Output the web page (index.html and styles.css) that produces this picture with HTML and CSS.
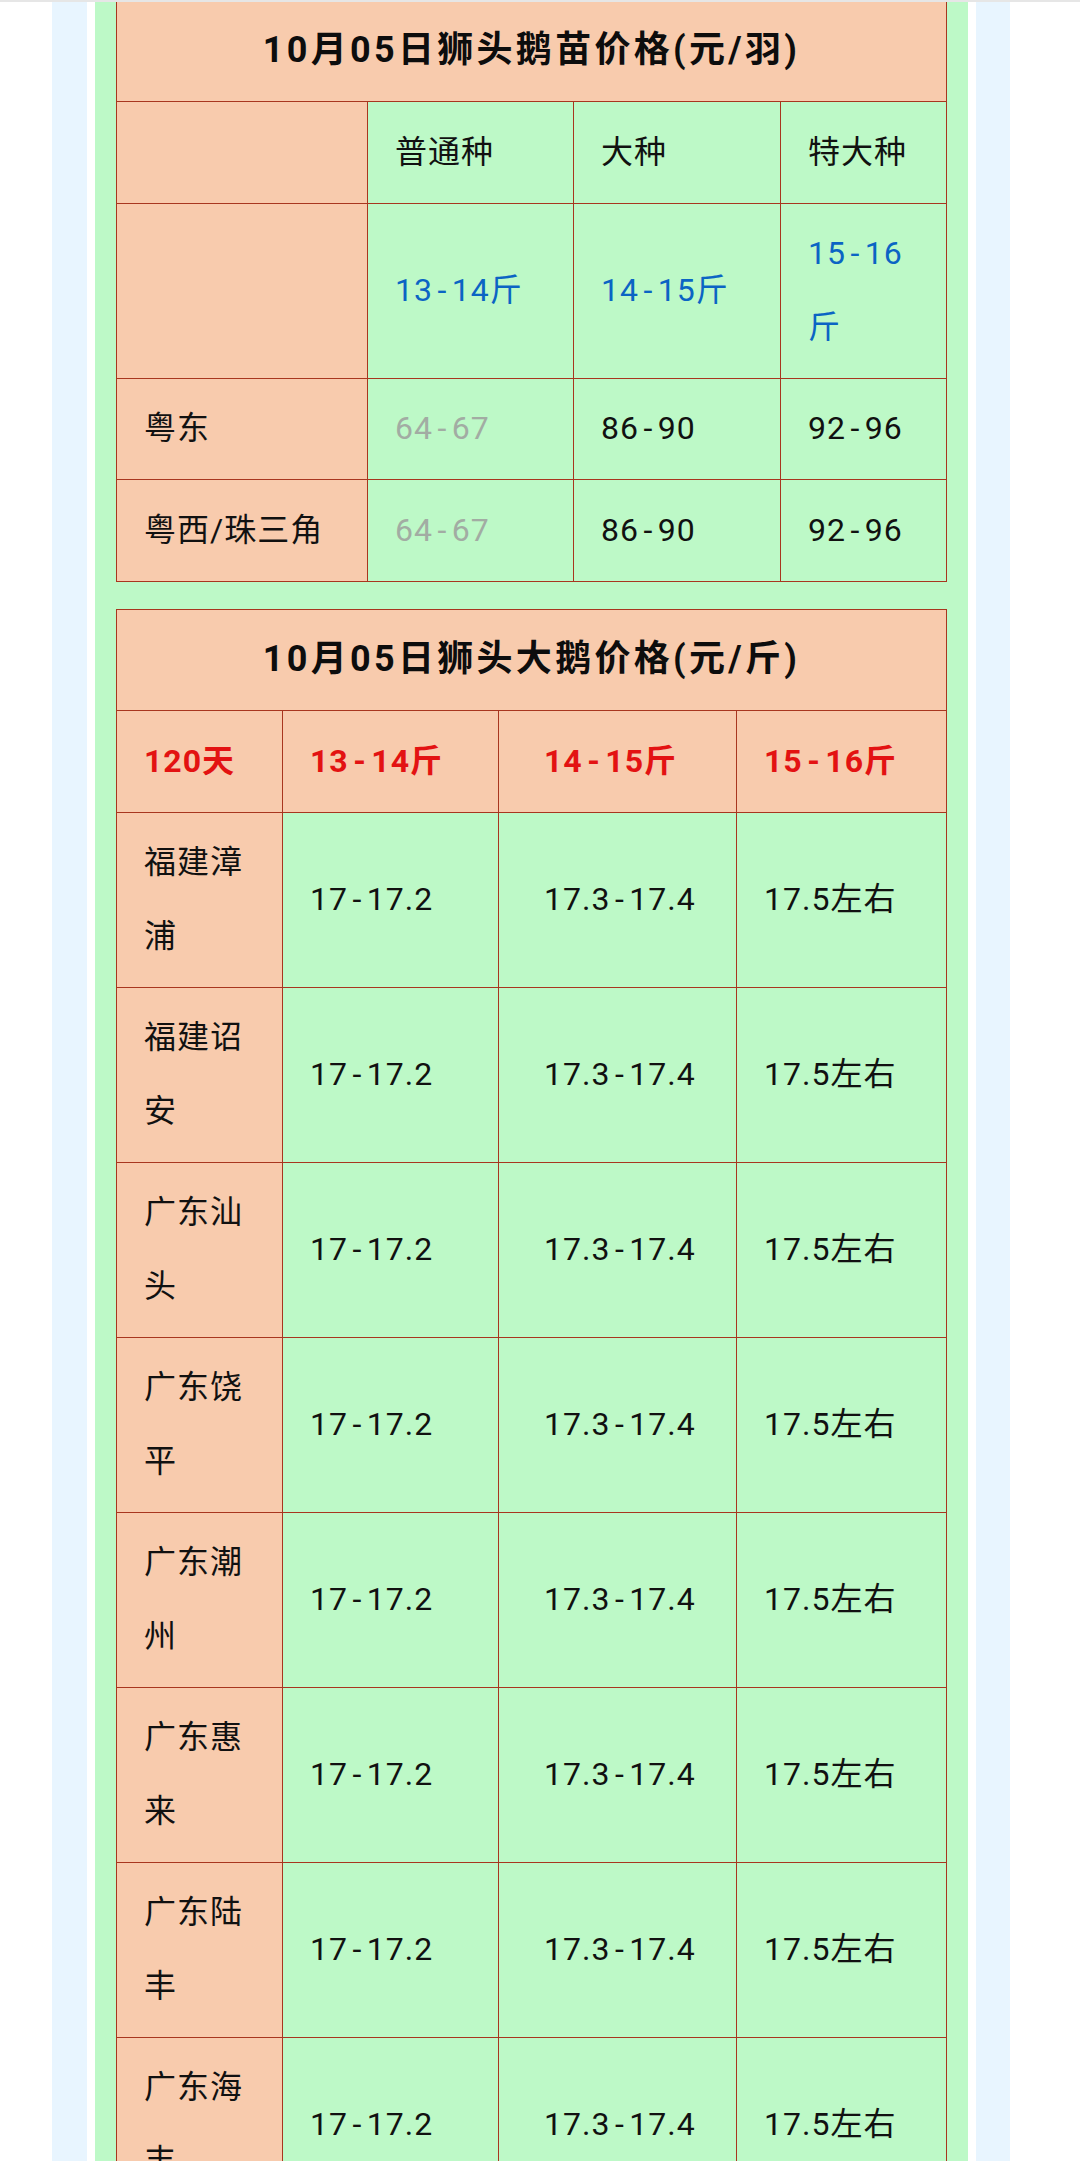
FILE: index.html
```html
<!DOCTYPE html>
<html lang="zh-CN">
<head>
<meta charset="utf-8">
<title>狮头鹅价格</title>
<link rel="stylesheet" href="styles.css">
</head>
<body>
<div class="topline"></div>
<div class="page">
  <div class="gutter-l"></div>
  <div class="side"></div>
  <div class="gap"></div>
  <main class="content">
    <table class="price t1">
      <colgroup><col class="c1a"><col class="c2a"><col class="c3a"><col class="c4a"></colgroup>
      <tr><td colspan="4" class="title first">10月05日狮头鹅苗价格(元/羽)</td></tr>
      <tr><td class="peach"></td><td>普通种</td><td>大种</td><td>特大种</td></tr>
      <tr><td class="peach"></td><td class="blue">13<span class="d">-</span>14斤</td><td class="blue">14<span class="d">-</span>15斤</td><td class="blue">15<span class="d">-</span>16斤</td></tr>
      <tr><td class="peach">粤东</td><td class="gray">64<span class="d">-</span>67</td><td>86<span class="d">-</span>90</td><td>92<span class="d">-</span>96</td></tr>
      <tr><td class="peach">粤西/珠三角</td><td class="gray">64<span class="d">-</span>67</td><td>86<span class="d">-</span>90</td><td>92<span class="d">-</span>96</td></tr>
    </table>
    <table class="price t2">
      <colgroup><col class="c1b"><col class="c2b"><col class="c3b"><col class="c4b"></colgroup>
      <tr><td colspan="4" class="title">10月05日狮头大鹅价格(元/斤)</td></tr>
      <tr class="head"><td class="peach red">120天</td><td class="peach red">13<span class="d">-</span>14斤</td><td class="peach red mid">14<span class="d">-</span>15斤</td><td class="peach red">15<span class="d">-</span>16斤</td></tr>
      <tr><td class="peach">福建漳浦</td><td>17<span class="d">-</span>17.2</td><td class="mid">17.3<span class="d">-</span>17.4</td><td>17.5左右</td></tr>
      <tr><td class="peach">福建诏安</td><td>17<span class="d">-</span>17.2</td><td class="mid">17.3<span class="d">-</span>17.4</td><td>17.5左右</td></tr>
      <tr><td class="peach">广东汕头</td><td>17<span class="d">-</span>17.2</td><td class="mid">17.3<span class="d">-</span>17.4</td><td>17.5左右</td></tr>
      <tr><td class="peach">广东饶平</td><td>17<span class="d">-</span>17.2</td><td class="mid">17.3<span class="d">-</span>17.4</td><td>17.5左右</td></tr>
      <tr><td class="peach">广东潮州</td><td>17<span class="d">-</span>17.2</td><td class="mid">17.3<span class="d">-</span>17.4</td><td>17.5左右</td></tr>
      <tr><td class="peach">广东惠来</td><td>17<span class="d">-</span>17.2</td><td class="mid">17.3<span class="d">-</span>17.4</td><td>17.5左右</td></tr>
      <tr><td class="peach">广东陆丰</td><td>17<span class="d">-</span>17.2</td><td class="mid">17.3<span class="d">-</span>17.4</td><td>17.5左右</td></tr>
      <tr><td class="peach">广东海丰</td><td>17<span class="d">-</span>17.2</td><td class="mid">17.3<span class="d">-</span>17.4</td><td>17.5左右</td></tr>
    </table>
  </main>
  <div class="gap"></div>
  <div class="side side-r"></div>
  <div class="gutter-r"></div>
</div>
</body>
</html>
```
FILE: styles.css
```css
html, body {
  margin: 0;
  padding: 0;
  background: #ffffff;
}
body {
  width: 1080px;
  height: 2161px;
  overflow: hidden;
  font-family: Roboto, "Noto Sans CJK SC", sans-serif;
  color: #111111;
}
.topline {
  height: 2px;
  background: #e6e6e6;
}
.page {
  display: flex;
  height: 2159px;
}
.gutter-l { width: 52px; flex: none; }
.gutter-r { width: 70px; flex: none; }
.side { width: 35px; flex: none; background: #e8f5ff; }
.side-r { width: 34px; }
.gap { width: 8px; flex: none; }
.content {
  width: 873px;
  flex: none;
  box-sizing: border-box;
  padding-left: 21px;
  background: #bdf9c7;
}
.price {
  border-collapse: collapse;
  table-layout: fixed;
  width: 831px;
  font-size: 32px;
  letter-spacing: 1px;
}
.t2 { margin-top: 27px; }
.price td {
  border: 1px solid #a8361f;
  padding: 13.5px 27px;
  line-height: 73.5px;
  vertical-align: middle;
  background: #bdf9c7;
  word-break: break-all;
}
.price td.peach,
.price td.title { background: #f8cbad; }
.price td.title {
  text-align: center;
  font-weight: bold;
  font-size: 36px;
  letter-spacing: 3.3px;
  color: #0d0d0d;
}
.price td.first {
  border-top: none;
  padding-top: 12px;
}
.d { margin: 0 4.5px; }
.c1a { width: 251px; }
.c2a { width: 206px; }
.c3a { width: 207px; }
.c4a { width: 166px; }
.c1b { width: 166px; }
.c2b { width: 216px; }
.c3b { width: 238px; }
.c4b { width: 210px; }
.blue { color: #0b64c4; }
.gray { color: #a2aca3; }
.red { color: #e31212; font-weight: bold; }
.price td.mid { padding-left: 45px; }
```
